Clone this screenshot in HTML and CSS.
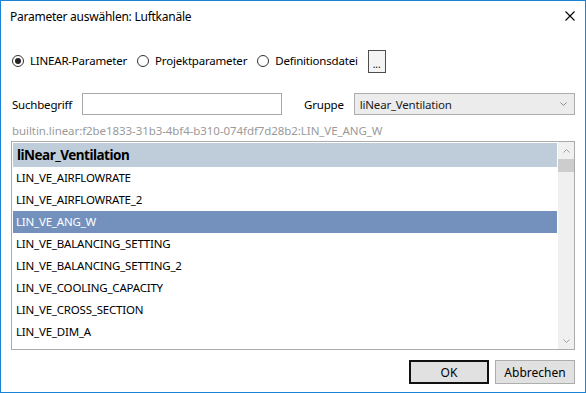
FILE: index.html
```html
<!doctype html>
<html>
<head>
<meta charset="utf-8">
<title>Parameter auswählen</title>
<link rel="stylesheet" href="styles.css">
</head>
<body>
<div class="window">
	<div class="titlebar">
		<span class="title">Parameter auswählen: Luftkanäle</span>
		<svg class="close" width="10" height="10" viewBox="0 0 10 10"><path d="M0.5 0.5L9.5 9.5M9.5 0.5L0.5 9.5" stroke="#000" stroke-width="1.1" fill="none"/></svg>
	</div>
	<div class="content">
		<div class="source-row">
			<label class="radio"><span class="dot checked"></span>LINEAR-Parameter</label>
			<label class="radio"><span class="dot"></span>Projektparameter</label>
			<label class="radio"><span class="dot"></span>Definitionsdatei</label>
			<button class="browse">...</button>
		</div>
		<div class="search-row">
			<span class="lbl">Suchbegriff</span>
			<input class="search" type="text">
			<span class="lbl group-lbl">Gruppe</span>
			<div class="select">liNear_Ventilation<svg width="7" height="4" viewBox="0 0 7 4"><path d="M0.5 0.5L3.5 3.5L6.5 0.5" stroke="#888" fill="none"/></svg></div>
		</div>
		<div class="uid">builtin.linear:f2be1833-31b3-4bf4-b310-074fdf7d28b2:LIN_VE_ANG_W</div>
		<div class="list">
			<div class="rows">
				<div class="group">liNear_Ventilation</div>
				<div class="item">LIN_VE_AIRFLOWRATE</div>
				<div class="item">LIN_VE_AIRFLOWRATE_2</div>
				<div class="item sel">LIN_VE_ANG_W</div>
				<div class="item">LIN_VE_BALANCING_SETTING</div>
				<div class="item">LIN_VE_BALANCING_SETTING_2</div>
				<div class="item">LIN_VE_COOLING_CAPACITY</div>
				<div class="item">LIN_VE_CROSS_SECTION</div>
				<div class="item">LIN_VE_DIM_A</div>
			</div>
			<div class="scrollbar">
				<svg class="arrow" width="7" height="4" viewBox="0 0 7 4"><path d="M0.5 3.5L3.5 0.5L6.5 3.5" stroke="#a0a0a0" fill="none"/></svg>
				<div class="thumb"></div>
				<div class="track"></div>
				<svg class="arrow" width="7" height="4" viewBox="0 0 7 4"><path d="M0.5 0.5L3.5 3.5L6.5 0.5" stroke="#a0a0a0" fill="none"/></svg>
			</div>
		</div>
		<div class="buttons">
			<button class="btn default">OK</button>
			<button class="btn">Abbrechen</button>
		</div>
	</div>
</div>
</body>
</html>
```

FILE: styles.css
```css
*{ margin:0; padding:0; box-sizing:border-box;}
body{ background:#fff; font-family:"Noto Sans","Open Sans",sans-serif; font-size:11.5px; letter-spacing:-0.2px; color:#000;}
.window{ width:586px; height:393px; border:1px solid #1883d7; background:#fff;}

.titlebar{ height:30px; display:flex; align-items:center; padding:0 10px 0 9px;}
.title{ flex:1; padding-top:1px; font-size:12px; letter-spacing:-0.25px;}

.content{ padding:0 10px;}

.source-row{ height:23px; margin-top:19px; display:flex; align-items:center; padding-left:1px;}
.radio{ display:flex; align-items:center; margin-right:10px; line-height:16px; position:relative; top:-1px;}
.dot{ width:12px; height:12px; border:1px solid #333; border-radius:50%; margin-right:6px; display:flex; align-items:center; justify-content:center;}
.dot.checked::after{ content:""; width:6px; height:6px; border-radius:50%; background:#222;}
.browse{ width:18px; height:23px; border:1px solid #4d4d4d; background:#f4f4f4; font:inherit; font-size:10px; line-height:23px; padding-top:2px;}

.search-row{ height:22px; margin-top:20px; display:flex; align-items:center;}
.lbl{ padding-left:1px;}
.search{ width:200px; height:22px; margin-left:10px; border:1px solid #a9a9a9; background:#fff;}
.group-lbl{ margin-left:21px;}
.select{ margin-left:10px; flex:1; height:22px; border:1px solid #adadad; background:#ececec; display:flex; align-items:center; justify-content:space-between; padding:0 7px 0 5px; color:#1a1a1a;}

.uid{ margin-top:8px; height:16px; line-height:16px; color:#9a9a9a; padding-left:1px; letter-spacing:-0.07px;}

.list{ margin-top:2px; height:209px; border:1px solid #ababab; display:flex;}
.rows{ flex:1; padding:1px;}
.group{ height:24px; line-height:24px; background:#bfcddb; font-weight:bold; font-size:13.5px; letter-spacing:-0.5px; padding-left:4px;}
.item{ height:22px; line-height:22px; padding-left:3px;}
.item.sel{ background:#7491bd; color:#fff;}

.scrollbar{ width:16px; background:#f0f0f0; display:flex; flex-direction:column; align-items:center;}
.arrow{ margin:7px 0 6px;}
.thumb{ width:16px; height:13px; background:#cdcdcd;}
.track{ flex:1;}

.buttons{ margin-top:10px; display:flex; justify-content:flex-end; gap:6px;}
.btn{ width:80px; height:24px; border:1px solid #adadad; background:#e1e1e1; font:inherit; font-size:12px; color:#000;}
.btn.default{ border:2px solid #111;}
```
